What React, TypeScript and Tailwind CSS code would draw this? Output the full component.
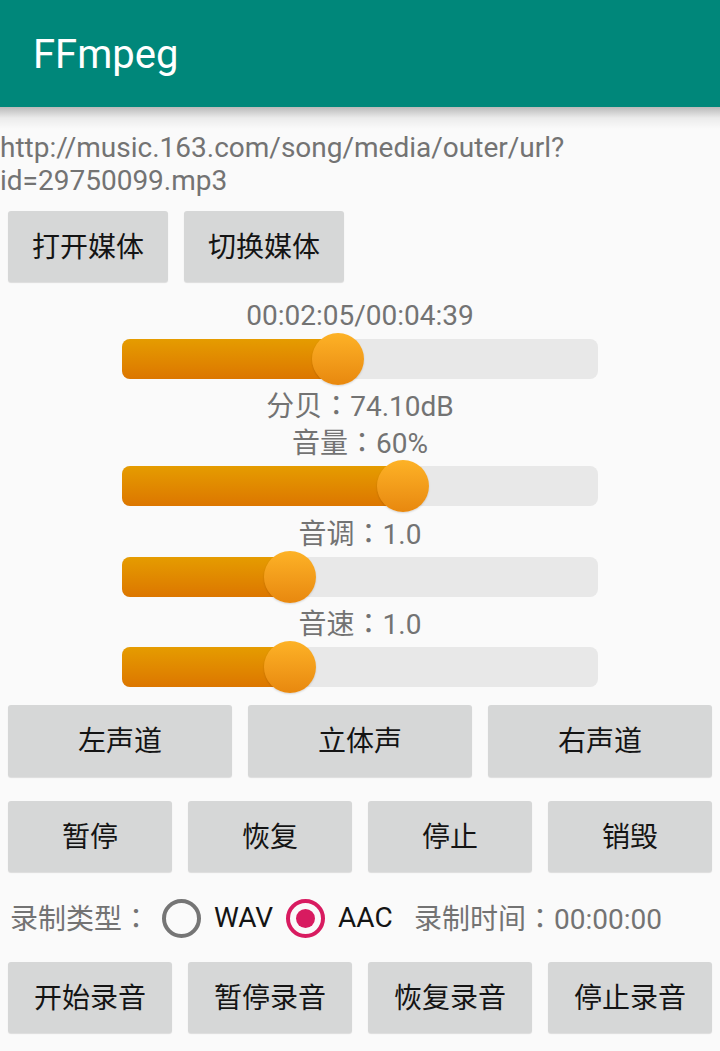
import React from "react";

const C = ({ children }: { children?: React.ReactNode }) => (
  <span className="font-['Noto_Sans_CJK_TC',sans-serif]">{children ?? "："}</span>
);

function Btn({ label, w, h = "h-[71px]" }: { label: string; w: string; h?: string }) {
  return (
    <div
      className={`${w} ${h} bg-[#D6D7D7] rounded-[3px] shadow-[0_1px_1px_rgba(0,0,0,0.12)] flex items-center justify-center pt-[2px] text-[28px] text-[#141414] leading-none`}
    >
      {label}
    </div>
  );
}

function Slider({ frac }: { frac: number }) {
  return (
    <div className="ml-[122px] w-[476px] h-[52px] relative flex items-center">
      <div className="w-full h-[40px] rounded-[8px] bg-[#E8E8E8] overflow-hidden">
        <div
          className="h-full bg-gradient-to-b from-[#E59C00] to-[#DC7600]"
          style={{ width: `${frac * 476}px` }}
        />
      </div>
      <div
        className="absolute top-0 w-[52px] h-[52px] rounded-full bg-gradient-to-b from-[#FDB226] to-[#E8880E] shadow-[0_1px_2px_rgba(0,0,0,0.15)]"
        style={{ left: `${frac * 476 - 26}px` }}
      />
    </div>
  );
}

function Label({ children, mt, cjk = false }: { children: React.ReactNode; mt: string; cjk?: boolean }) {
  return (
    <div
      className={`${mt} h-[33px] ${cjk ? "leading-[28px]" : "leading-[32px]"} text-center text-[28px] text-[#737373] whitespace-nowrap`}
    >
      {children}
    </div>
  );
}

export default function App() {
  return (
    <div className="w-[720px] h-[1051px] bg-[#FAFAFA] relative overflow-hidden font-[Roboto,'Noto_Sans_CJK_SC',sans-serif]">
      <div className="h-[107px] bg-[#00877A] pl-[33px] pt-[3px] flex items-center">
        <span className="text-[40px] leading-[40px] text-white font-normal">FFmpeg</span>
      </div>
      <div className="absolute left-0 top-[107px] w-full h-[22px] bg-gradient-to-b from-[rgba(0,0,0,0.26)] via-[rgba(0,0,0,0.06)] to-transparent pointer-events-none" />

      <div className="mt-[24px] text-[28px] leading-[33px] text-[#737373] whitespace-nowrap">
        http://music.163.com/song/media/outer/url?
        <br />
        id=29750099.mp3
      </div>

      <div className="mt-[14px] pl-[8px] flex gap-[16px]">
        <Btn label="打开媒体" w="w-[160px]" />
        <Btn label="切换媒体" w="w-[160px]" />
      </div>

      <Label mt="mt-[18px]">00:02:05/00:04:39</Label>
      <Slider frac={0.454} />
      <Label mt="mt-[5px]" cjk>
        分贝<C />74.10dB
      </Label>
      <Label mt="mt-[4px]" cjk>
        音量<C />60%
      </Label>
      <Slider frac={0.59} />
      <Label mt="mt-[6px]" cjk>
        音调<C />1.0
      </Label>
      <Slider frac={0.353} />
      <Label mt="mt-[5px]" cjk>
        音速<C />1.0
      </Label>
      <Slider frac={0.353} />

      <div className="mt-[12px] pl-[8px] flex gap-[16px]">
        <Btn label="左声道" w="w-[224px]" h="h-[72px]" />
        <Btn label="立体声" w="w-[224px]" h="h-[72px]" />
        <Btn label="右声道" w="w-[224px]" h="h-[72px]" />
      </div>

      <div className="mt-[24px] pl-[8px] flex gap-[16px]">
        <Btn label="暂停" w="w-[164px]" />
        <Btn label="恢复" w="w-[164px]" />
        <Btn label="停止" w="w-[164px]" />
        <Btn label="销毁" w="w-[164px]" />
      </div>

      <div className="mt-[22px] h-[48px] flex items-center text-[28px] whitespace-nowrap">
        <span className="ml-[10px] w-[152px] text-[#737373]">
          录制类型<C />
        </span>
        <div className="w-[39px] h-[39px] rounded-full border-[4px] border-[#757575]" />
        <span className="ml-[13px] w-[59px] text-[#141414]">WAV</span>
        <div className="ml-[13px] w-[39px] h-[39px] rounded-full border-[4px] border-[#D81B60] flex items-center justify-center">
          <div className="w-[19px] h-[19px] rounded-full bg-[#D81B60]" />
        </div>
        <span className="ml-[13px] w-[54px] text-[#141414]">AAC</span>
        <span className="ml-[22px] text-[#737373]">
          录制时间<C />00:00:00
        </span>
      </div>

      <div className="mt-[20px] pl-[8px] flex gap-[16px]">
        <Btn label="开始录音" w="w-[164px]" />
        <Btn label="暂停录音" w="w-[164px]" />
        <Btn label="恢复录音" w="w-[164px]" />
        <Btn label="停止录音" w="w-[164px]" />
      </div>
    </div>
  );
}
